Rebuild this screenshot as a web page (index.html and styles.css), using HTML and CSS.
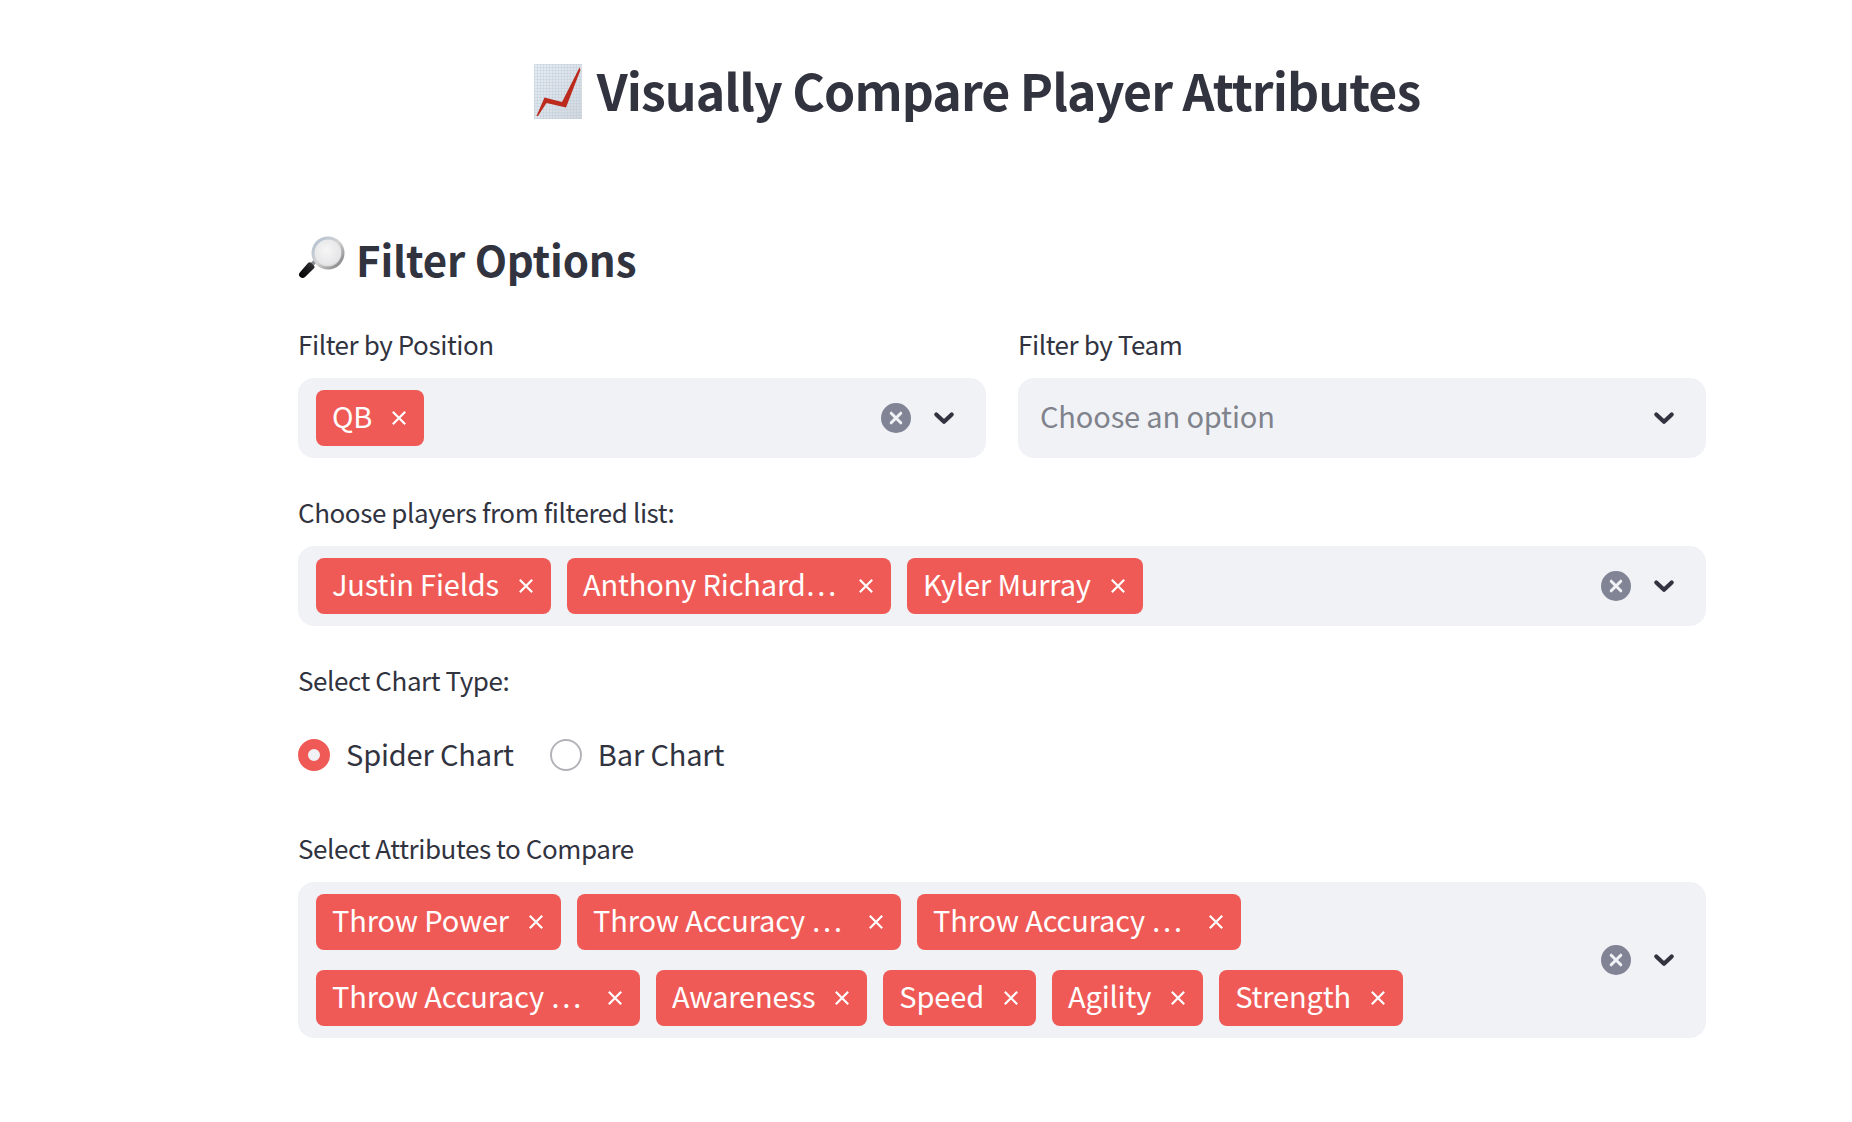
FILE: index.html
```html
<!DOCTYPE html>
<html lang="en">
<head>
<meta charset="utf-8">
<title>Visually Compare Player Attributes</title>
<link rel="stylesheet" href="styles.css">
</head>
<body>
<svg class="defs" width="0" height="0" aria-hidden="true">
  <defs>
    <symbol id="chev" viewBox="0 0 40 40"><path d="M12.3 16.5L20 23.8L27.7 16.5" stroke="currentColor" stroke-width="4.2" stroke-linecap="round" stroke-linejoin="round" fill="none"/></symbol>
    <symbol id="tagx" viewBox="0 0 16 16"><path d="M1.8 1.8L14.2 14.2M14.2 1.8L1.8 14.2" stroke="#fff" stroke-width="2.2" stroke-linecap="butt" fill="none"/></symbol>
    <symbol id="clear" viewBox="0 0 30 30"><circle cx="15" cy="15" r="15" fill="#808495"/><path d="M10.2 10.2L19.8 19.8M19.8 10.2L10.2 19.8" stroke="#f0f2f6" stroke-width="3" stroke-linecap="round" fill="none"/></symbol>
    <pattern id="grid" width="3" height="3" patternUnits="userSpaceOnUse"><path d="M3 0H0V3" fill="none" stroke="#b4c6d8" stroke-width=".7"/></pattern>
    <linearGradient id="paper" x1="0" y1="0" x2="1" y2="1"><stop offset="0" stop-color="#e6edf3"/><stop offset="1" stop-color="#d3d8dd"/></linearGradient>
    <radialGradient id="lens" cx=".45" cy=".4" r=".7"><stop offset="0" stop-color="#f6f6f6"/><stop offset=".75" stop-color="#e6e6e8"/><stop offset="1" stop-color="#c4c6ca"/></radialGradient>
    <linearGradient id="rim" x1="0" y1="0" x2="1" y2="1"><stop offset="0" stop-color="#a9bcd0"/><stop offset=".5" stop-color="#d4d4d4"/><stop offset="1" stop-color="#6d6d6d"/></linearGradient>
    <linearGradient id="grip" x1="1" y1="0" x2="0" y2="1"><stop offset="0" stop-color="#3a3c40"/><stop offset=".45" stop-color="#1a1a1c"/><stop offset="1" stop-color="#000"/></linearGradient>
  </defs>
</svg>
<main class="page">
  <h1 class="title">
    <svg class="emoji-chart" viewBox="0 0 48 55" role="img" aria-label="chart increasing">
      <rect width="48" height="55" fill="url(#paper)"/>
      <rect width="48" height="55" fill="url(#grid)"/>
      <path d="M2.5 52L10.5 33.5L28 38L45.5 3.5L46.5 6L32 43.5L12.5 39L4 52Z" fill="#bb2a1c"/>
    </svg>
    <span>Visually Compare Player Attributes</span>
  </h1>

  <h2 class="section">
    <svg class="emoji-search" viewBox="0 0 47 43" role="img" aria-label="magnifying glass">
      <path d="M19 24L13 29" stroke="#8a8c90" stroke-width="4" fill="none"/>
      <circle cx="30" cy="17" r="16.5" fill="url(#rim)"/>
      <circle cx="30" cy="17" r="13.4" fill="url(#lens)"/>
      <path d="M10 27C11 26 12.2 26 13.2 27L15.8 29.6C16.8 30.6 16.8 31.6 15.8 32.6L7 41C5.6 42.4 3.6 42.4 2.2 41S.4 38 1.8 36.4Z" fill="url(#grip)"/>
    </svg>
    <span>Filter Options</span>
  </h2>

  <div class="columns">
    <div class="field">
      <label class="label">Filter by Position</label>
      <div class="select">
        <div class="tags">
          <span class="tag"><span class="tag-text">QB</span><svg class="tag-x"><use href="#tagx"/></svg></span>
        </div>
        <svg class="clear"><use href="#clear"/></svg>
        <svg class="chev"><use href="#chev"/></svg>
      </div>
    </div>
    <div class="field">
      <label class="label">Filter by Team</label>
      <div class="select">
        <div class="tags"><span class="placeholder">Choose an option</span></div>
        <svg class="chev"><use href="#chev"/></svg>
      </div>
    </div>
  </div>

  <div class="field">
    <label class="label">Choose players from filtered list:</label>
    <div class="select">
      <div class="tags">
        <span class="tag"><span class="tag-text">Justin Fields</span><svg class="tag-x"><use href="#tagx"/></svg></span>
        <span class="tag tag-trunc"><span class="tag-text">Anthony Richard…</span><svg class="tag-x"><use href="#tagx"/></svg></span>
        <span class="tag"><span class="tag-text">Kyler Murray</span><svg class="tag-x"><use href="#tagx"/></svg></span>
      </div>
      <svg class="clear"><use href="#clear"/></svg>
      <svg class="chev"><use href="#chev"/></svg>
    </div>
  </div>

  <div class="field">
    <label class="label">Select Chart Type:</label>
    <div class="radios">
      <span class="radio"><span class="dot dot-on"></span><span class="radio-text">Spider Chart</span></span>
      <span class="radio"><span class="dot"></span><span class="radio-text">Bar Chart</span></span>
    </div>
  </div>

  <div class="field field-attrs">
    <label class="label">Select Attributes to Compare</label>
    <div class="select">
      <div class="tags tags-wrap">
        <span class="tag"><span class="tag-text">Throw Power</span><svg class="tag-x"><use href="#tagx"/></svg></span>
        <span class="tag tag-trunc"><span class="tag-text">Throw Accuracy …</span><svg class="tag-x"><use href="#tagx"/></svg></span>
        <span class="tag tag-trunc"><span class="tag-text">Throw Accuracy …</span><svg class="tag-x"><use href="#tagx"/></svg></span>
        <span class="tag tag-trunc"><span class="tag-text">Throw Accuracy …</span><svg class="tag-x"><use href="#tagx"/></svg></span>
        <span class="tag"><span class="tag-text">Awareness</span><svg class="tag-x"><use href="#tagx"/></svg></span>
        <span class="tag"><span class="tag-text">Speed</span><svg class="tag-x"><use href="#tagx"/></svg></span>
        <span class="tag"><span class="tag-text">Agility</span><svg class="tag-x"><use href="#tagx"/></svg></span>
        <span class="tag"><span class="tag-text">Strength</span><svg class="tag-x"><use href="#tagx"/></svg></span>
      </div>
      <svg class="clear"><use href="#clear"/></svg>
      <svg class="chev"><use href="#chev"/></svg>
    </div>
  </div>
</main>
</body>
</html>
```

FILE: styles.css
```css
* { box-sizing: border-box; }
html, body { margin: 0; background: #fff; }
body {
  min-height: 1122px;
  font-family: "Noto Sans CJK SC", "Source Sans Pro", "Noto Sans", sans-serif;
  color: #31333f;
  overflow: hidden;
}
.defs { display: block; height: 0; }
.page {
  width: 1408px;
  margin-left: 298px;
  padding-top: 57px;
}
.title {
  display: flex;
  align-items: center;
  justify-content: center;
  gap: 15px;
  height: 64px;
  margin: 0 50px 0 0;
  font-size: 50px;
  letter-spacing: -0.92px;
  line-height: 64px;
  font-weight: 600;
}
.emoji-chart { width: 48px; height: 55px; flex: none; margin-top: 4px; }
.section {
  display: flex;
  align-items: center;
  gap: 11px;
  height: 60px;
  margin: 108px 0 0;
  font-size: 42px;
  letter-spacing: -0.15px;
  line-height: 60px;
  font-weight: 600;
}
.emoji-search { width: 47px; height: 43px; flex: none; margin-top: -3px; }
.columns {
  display: grid;
  grid-template-columns: 1fr 1fr;
  gap: 32px;
  margin-top: 33px;
}
.field { margin-top: 32px; }
.columns .field { margin-top: 0; }
.label {
  display: block;
  height: 56px;
  padding-top: 4px;
  font-size: 26px;
  letter-spacing: -0.42px;
  line-height: 36px;
  font-weight: 400;
}
.select {
  display: flex;
  align-items: center;
  min-height: 80px;
  padding: 12px 22px 12px 18px;
  border-radius: 16px;
  background: #f0f2f6;
}
.tags {
  display: flex;
  flex: 1;
  flex-wrap: wrap;
  gap: 20px 16px;
  align-items: center;
  min-width: 0;
}
.tags-wrap { padding-right: 60px; }
.tag {
  display: inline-flex;
  align-items: center;
  gap: 19px;
  height: 56px;
  padding: 0 17px 0 16px;
  border-radius: 8px;
  background: #ef5a56;
  color: #fff;
  font-size: 29px;
  letter-spacing: -0.15px;
  line-height: 56px;
  white-space: nowrap;
}
.tag-trunc { width: 324px; }
.tag-text { flex: 1; margin-top: -6px; }
.tag-x { width: 16px; height: 16px; flex: none; }
.placeholder {
  margin-top: -6px;
  padding-left: 4px;
  font-size: 29px;
  letter-spacing: -0.15px;
  line-height: 56px;
  color: #80828c;
}
.clear { width: 30px; height: 30px; flex: none; margin-right: 13px; }
.chev { width: 40px; height: 40px; flex: none; color: #31333f; }
.radios {
  display: flex;
  gap: 36px;
  align-items: center;
  height: 52px;
  margin-top: 15px;
  font-size: 29px;
  letter-spacing: -0.15px;
  line-height: 52px;
}
.radio { display: inline-flex; align-items: center; gap: 16px; }
.radio-text { margin-top: -4px; }
.dot {
  width: 32px;
  height: 32px;
  flex: none;
  border: 2px solid #b2b3b8;
  border-radius: 50%;
  background: #fff;
}
.dot-on {
  border: 10px solid #ef5a56;
  background: #f0f2f6;
}
.field-attrs { margin-top: 45px; }
```
